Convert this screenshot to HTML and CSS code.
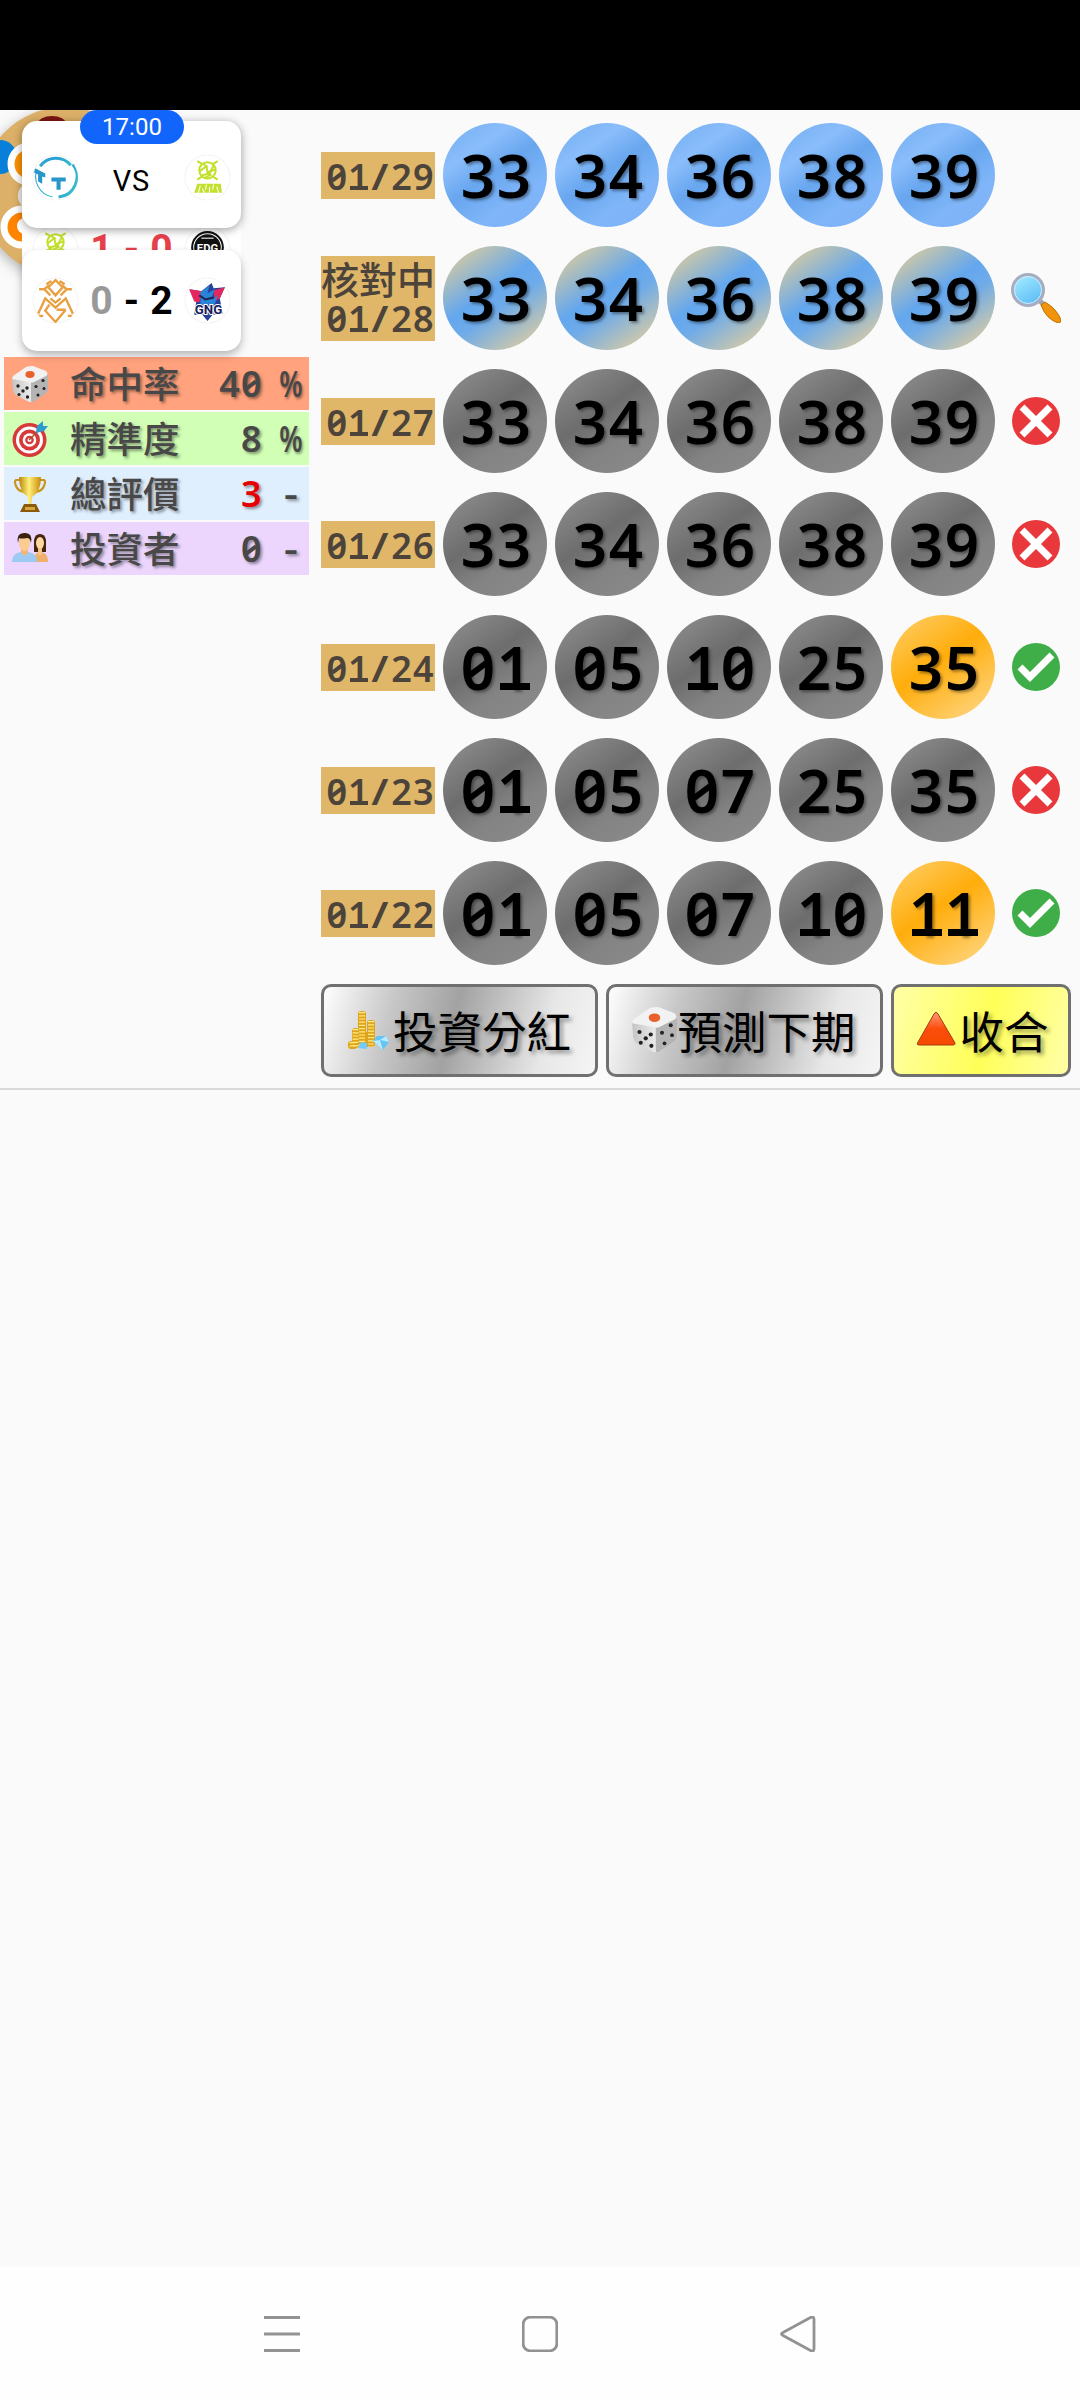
FILE: index.html
```html
<!DOCTYPE html>
<html lang="zh-Hant">
<head>
    <meta charset="UTF-8" />
    <title>539</title>
    <link rel="stylesheet" href="styles.css">
</head>
<body>
<svg class="defs">
    <linearGradient id="gold" x2="1"><stop stop-color="#b98508"/><stop offset=".45" stop-color="#fff07a"/><stop offset="1" stop-color="#c98a08"/></linearGradient>
    <linearGradient id="red" x2="0" y2="1"><stop stop-color="#ff9a75"/><stop offset=".5" stop-color="#fb4d0c"/><stop offset="1" stop-color="#f54b00"/></linearGradient>
    <linearGradient id="glass" x2=".6" y2="1"><stop stop-color="#a8f1ff"/><stop offset="1" stop-color="#61bdf8"/></linearGradient>
    <linearGradient id="tt" x2="1" y2="1"><stop stop-color="#2496d8"/><stop offset="1" stop-color="#38c4c8"/></linearGradient>
    <linearGradient id="face" x2="1"><stop stop-color="#c4c4c4"/><stop offset="1" stop-color="#ededed"/></linearGradient>
    <symbol id="dice" viewBox="0 0 36 36">
        <path d="M0 12 20 15 20 36 17 36 4 29Q2 28 1 24z" fill="url(#face)"/>
        <path d="M19 16 35 8Q37 9 36 22 36 26 33 28L21 36Q19 37 19 34z" fill="#b4b4b4"/>
        <path d="M1 10 14 1Q17 0 21 0L34 5Q37 8 34 10L22 16Q20 17 17 16L0 13z" fill="#f2f2f2"/>
        <ellipse cx="18" cy="8.500" rx="4.600" ry="3.400" fill="#e8612c"/>
        <g fill="#222"><circle cx="6" cy="20" r="1.7"/><circle cx="15" cy="22" r="1.7"/><circle cx="11" cy="25" r="1.7"/><circle cx="7" cy="28.500" r="1.6"/><circle cx="15.500" cy="31" r="1.7"/><circle cx="24" cy="20.500" r="1.6"/><circle cx="31" cy="14.500" r="1.6"/><circle cx="26" cy="29" r="1.5"/><circle cx="32" cy="22.500" r="1.5"/></g>
    </symbol>
    <symbol id="target" viewBox="0 0 36 36">
        <circle cx="17.500" cy="19" r="17" fill="#d93838"/><circle cx="17.500" cy="19" r="13.500" fill="#fff"/><circle cx="17.500" cy="19" r="10.500" fill="#d93838"/><circle cx="17.500" cy="19" r="6.800" fill="#fff"/><circle cx="17.500" cy="19" r="4.300" fill="#d93838"/><circle cx="17.500" cy="19" r="2" fill="#fff"/>
        <path d="M17 19 27 9" stroke="#a0522d" stroke-width="1.500"/>
        <path d="M24 12 25 5 31 0 31 5 36 5 32 10z" fill="#2c9cd0"/>
    </symbol>
    <symbol id="trophy" viewBox="0 0 36 36">
        <path d="M8 4H4Q2 5 4 10 6 15 12 16M28 4H32Q34 5 32 10 30 15 24 16" fill="none" stroke="#c9951c" stroke-width="2.200"/>
        <path d="M7 1H29Q29 16 20 21L19.500 29H16.500L16 21Q7 16 7 1z" fill="url(#gold)"/>
        <path d="M12 28H24L28 36H8z" fill="#8a5a0c"/><path d="M13 31H23V34H13z" fill="#d8a53a"/>
    </symbol>
    <symbol id="people" viewBox="0 0 36 36">
        <path d="M22 21V9Q23 3 28 3 33 3 34 9V21z" fill="#44250f"/>
        <path d="M22 31Q22 21 28 21 36 21 36 31z" fill="#eeb06a"/><ellipse cx="28" cy="12" rx="4" ry="6" fill="#ffd7a0"/><path d="M26 17h4v7h-4z" fill="#f6c489"/>
        <path d="M0 31Q0 22 9 21H16Q25 22 25 31z" fill="#9dcaf2"/>
        <path d="M9 17h7v5l-3.500 3L9 22z" fill="#eeb67b"/><ellipse cx="12.500" cy="12" rx="5.500" ry="8" fill="#fbcb90"/>
        <path d="M6 12Q4 2 12 2 21 1 19 12 18 7 15 7 9 8 7 7z" fill="#3a210f"/>
    </symbol>
    <symbol id="coins" viewBox="0 0 42 40">
        <g fill="#e0a41c"><rect x="11" y="1" width="8" height="36" rx="3"/><rect x="20" y="10" width="8" height="27" rx="3"/><rect x="5" y="18" width="7" height="20" rx="3"/><rect x="1" y="31" width="9" height="8" rx="3"/><rect x="15" y="22" width="8" height="15" rx="3"/></g>
        <g fill="none" stroke="#ffeb83" stroke-width="6" stroke-dasharray="1.200 2"><path d="M15 2V36M24 11V37M8.500 19V38M5.500 32V38"/></g>
        <path d="M11 38 14 32 20 33 20 39z" fill="#70cdf7"/><path d="M26 31 30 26 39 26 42 32 36 40z" fill="#64c4f5"/><path d="M26 31 33 30 36 40zM33 30 39 26 42 32z" fill="#b7ebff"/>
    </symbol>
    <symbol id="tri" viewBox="0 0 40 35"><path d="M20 1.500Q21 1 22 3L39 32Q39.500 34 37 34H3Q.500 34 1.500 32L18 3Q19 1 20 1.500z" fill="url(#red)" stroke="#a83b10"/></symbol>
    <symbol id="look" viewBox="0 0 50 50">
        <path d="M28 27 33 32" stroke="#a2a2aa" stroke-width="5"/>
        <path d="M30 32 34 29Q46 36 50 47 50 50 47 50 35 46 30 32z" fill="#f2930c" stroke="#bd7000"/>
        <circle cx="17" cy="17" r="15.500" fill="url(#glass)" stroke="#a6adc0" stroke-width="3"/><circle cx="17" cy="17" r="13.500" fill="none" stroke="#d7e8f4"/>
    </symbol>
    <symbol id="no" viewBox="0 0 48 48"><circle cx="24" cy="24" r="24" fill="#e8383c"/><path d="M10 10 38 38M38 10 10 38" stroke="#fff" stroke-width="7"/></symbol>
    <symbol id="yes" viewBox="0 0 48 48"><circle cx="24" cy="24" r="24" fill="#3fae49"/><path d="M8 24 18 34 40 12" fill="none" stroke="#fff" stroke-width="7"/></symbol>
    <symbol id="nip" viewBox="0 0 44 44">
        <g fill="none" stroke="#c3e02c" stroke-width="2"><circle cx="22" cy="15" r="8"/><path d="M12 6 17 9M32 6 27 9M12 24 17 21M32 24 27 21M14 16 21 11 22 17 30 14M16 20 24 18 28 10M18 9 22 12M20 22 26 19"/></g>
        <path d="M12 28H35L36 37H9z" fill="#c3e02c"/><path d="M13 37 15 30M17 33 19 37M21 29 20 34M24 31V37M28 29 27 34M31 31 33 37" stroke="#fff" stroke-width="1" fill="none"/>
    </symbol>
</svg>

<div class="statusbar"></div>

<main class="page">
    <section class="stats">
        <div class="stat hit"><svg><use href="#dice"/></svg><span class="name">命中率</span><span class="value mono">40</span><span class="unit mono">%</span></div>
        <div class="stat acc"><svg><use href="#target"/></svg><span class="name">精準度</span><span class="value mono">8</span><span class="unit mono">%</span></div>
        <div class="stat total"><svg><use href="#trophy"/></svg><span class="name">總評價</span><span class="value mono warn">3</span><span class="unit mono">-</span></div>
        <div class="stat inv"><svg><use href="#people"/></svg><span class="name">投資者</span><span class="value mono">0</span><span class="unit mono">-</span></div>
    </section>

    <section class="draws">
        <div id="rows"></div>
        <div class="buttons">
            <button class="silver"><svg class="coins"><use href="#coins"/></svg>投資分紅</button>
            <button class="silver"><svg class="dice"><use href="#dice"/></svg>預測下期</button>
            <button class="yellow"><svg class="tri"><use href="#tri"/></svg>收合</button>
        </div>
    </section>
</main>

<!-- floating score widget -->
<div class="floating">
    <div class="bubble">
        <svg viewBox="0 0 170 170">
            <ellipse cx="72" cy="17" rx="14" ry="8" fill="#7b1512"/>
            <circle cx="20" cy="50" r="17" fill="#087fd8"/>
            <circle cx="49" cy="57" r="18" fill="#ff9100" stroke="#fff" stroke-width="7"/>
            <circle cx="52" cy="89" r="14" fill="#eee"/>
            <circle cx="42" cy="120" r="18" fill="#ff8400" stroke="#fff" stroke-width="7"/><circle cx="45" cy="119" r="8" fill="#fff"/>
        </svg>
    </div>
    <div class="match middle">
        <svg class="team"><use href="#nip"/></svg><b class="score red"><i>1</i><i>-</i><i>0</i></b>
        <svg class="team" viewBox="0 0 44 44"><circle cx="22" cy="20" r="16" fill="#111"/><circle cx="22" cy="20" r="13.500" fill="none" stroke="#fff"/><path d="M16 11H28" stroke="#bbb" stroke-width="1.500"/><text x="22" y="24" text-anchor="middle" class="edg">EDG</text></svg>
    </div>
    <div class="match top">
        <svg class="team" viewBox="0 0 44 44"><g fill="none" stroke="url(#tt)"><path d="M7 11A19 19 0 0 1 37 10" stroke-width="3"/><path d="M39 9A20 20 0 0 1 25 41" stroke-width="3"/><path d="M4 14A20 20 0 0 0 19 41" stroke-width="1"/></g><path d="M2 13 12 18V22L9 21V28L5 26V19L1 17zM18 22H32V26H27V34H23V26H18z" fill="#2796c9"/></svg>
        <span class="vs">VS</span>
        <svg class="team"><use href="#nip"/></svg>
    </div>
    <div class="match bottom">
        <svg class="team" viewBox="0 0 44 44"><g fill="none" stroke="#e8a040" stroke-width="2.300"><path d="M22 2 29 9 22 17 15 9zM6 11 11 11 17 17M38 11 33 11 27 17M13 6 18 3M31 6 26 3M11 11 16 7M33 11 28 7"/><path d="M5 35 12 20 22 29 32 20 39 35M17 20 22 24 27 20M32 31H23M32 31 22 43 12 32 16 26M5 37H10M34 37H39"/></g></svg>
        <b class="score"><i class="lost">0</i><i>-</i><i>2</i></b>
        <svg class="team" viewBox="0 0 44 44"><path d="M5 11 16 13 26 5 28 10 39 9 34 20 37 35 27 36 22 42 17 36 9 36 11 23z" fill="#27409a"/><path d="M4 11 17 13 14 24 9 23zM39 9 28 12 29 23 34 20z" fill="#e4275f"/><path d="M15 14 24 7 22 15 29 11 26 21 32 17 29 26 15 26z" fill="#2784d8"/><path d="M14 17 20 21 28 19" stroke="#202352" fill="none" stroke-width="2"/><text x="23" y="35" text-anchor="middle" class="gng">GNG</text></svg>
    </div>
    <div class="time">17:00</div>
</div>

<nav class="navbar">
    <svg viewBox="0 0 36 36"><path d="M0 1.500H36M0 18H36M0 34.500H36"/></svg>
    <svg viewBox="0 0 36 36"><rect x="1.200" y="1.200" width="33.600" height="33.600" rx="7"/></svg>
    <svg viewBox="0 0 36 36"><path d="M3 16.500 30.500 1.500Q34 0 34 3.500V32.500Q34 36 30.500 34.500L3 19.500Q0 18 3 16.500z"/></svg>
</nav>

<script>
    const draws = [
        { date: '01/29', nums: ['33', '34', '36', '38', '39'], cls: 'next' },
        { date: '01/28', nums: ['33', '34', '36', '38', '39'], cls: 'checking', icon: 'look', note: '核對中' },
        { date: '01/27', nums: ['33', '34', '36', '38', '39'], icon: 'no' },
        { date: '01/26', nums: ['33', '34', '36', '38', '39'], icon: 'no' },
        { date: '01/24', nums: ['01', '05', '10', '25', '35'], icon: 'yes', hit: '35' },
        { date: '01/23', nums: ['01', '05', '07', '25', '35'], icon: 'no' },
        { date: '01/22', nums: ['01', '05', '07', '10', '11'], icon: 'yes', hit: '11' }
    ];

    // one fixed-width cell per character
    const names = { '%': 'pct', '/': 'slash', '-': 'dash' };
    const mono = s => [...s].map(c => `<span class="ch c-${names[c] || c}">${c}</span>`).join('');

    document.getElementById('rows').innerHTML = draws.map(d => `
        <div class="row ${d.cls || ''}">
            <div class="date">${d.note ? `<div class="note">${d.note}</div>` : ''}<div class="day">${mono(d.date)}</div></div>
            ${d.nums.map(n => `<div class="ball ${n === d.hit ? 'hit-ball' : ''}">${mono(n)}</div>`).join('')}
            ${d.icon ? `<svg class="mark ${d.icon}"><use href="#${d.icon}"/></svg>` : ''}
        </div>`).join('');

    document.querySelectorAll('.mono').forEach(el => el.innerHTML = mono(el.textContent));
</script>
</body>
</html>
```
FILE: styles.css
```css
* {
    box-sizing: border-box;
}
body {
    margin: 0;
    height: 2400px;
    display: flex;
    flex-direction: column;
    position: relative;
    overflow: hidden;
    background: #fafafa;
    font-family: "Noto Sans", "Noto Sans CJK TC", sans-serif;
}
.defs {
    position: absolute;
    width: 0;
    height: 0;
}
.statusbar {
    height: 110px;
    background: #000;
}
.page {
    display: flex;
    height: 980px;
    border-bottom: 2px solid #d9d9d9;
}

/* left table */
.stats {
    width: 305px;
    margin: 247px 12px 0 4px;
    display: flex;
    flex-direction: column;
    gap: 2px;
}
.stat {
    height: 53px;
    display: flex;
    align-items: center;
    padding-left: 8px;
    font-size: 36px;
    line-height: 51px;
    font-weight: 600;
    color: #484848;
    text-shadow: 2px 2px 3px rgba(0, 0, 0, .4);
}
.stat svg {
    width: 36px;
    height: 36px;
}
.name {
    font-family: "Noto Sans CJK TC", sans-serif;
    font-size: 36.5px;
    line-height: 49px;
    font-weight: 500;
    width: 115px;
    margin-left: 22px;
    margin-bottom: 2px;
    white-space: nowrap;
}
.value {
    width: 77px;
    text-align: right;
}
.unit {
    width: 40px;
    text-align: right;
}
.warn {
    color: #e60000;
}
.hit { background: #ffa27d; }
.acc { background: #d1ffb5; }
.total { background: #e0effe; }
.inv { background: #ecd6fe; }

/* monospaced digits */
.ch {
    display: inline-block;
    position: relative;
    width: .6em;
    line-height: 1.2;
    text-align: center;
}
/* foot of the 1 */
.c-1::after {
    content: "";
    position: absolute;
    left: .07em;
    right: .04em;
    bottom: .212em;
    height: .115em;
    background: currentColor;
}
/* stroke through the 0 */
.c-0::after {
    content: "";
    position: absolute;
    left: .13em;
    bottom: .52em;
    width: .34em;
    height: .1em;
    background: currentColor;
    transform: rotate(-37deg);
}
.c-pct {
    display: inline-flex;
    justify-content: center;
    transform: scaleX(.74);
}
.c-slash {
    transform: scaleX(1.2);
}
.c-dash {
    transform: scaleX(1.2);
}

/* draws */
.draws {
    width: 755px;
    padding-top: 4px;
}
.row {
    height: 123px;
    padding-bottom: 1px;
    display: flex;
    align-items: center;
}
.date {
    width: 114px;
    margin-right: 8px;
    background: #e0b669;
    color: #4c443a;
    font-size: 36px;
    font-weight: 600;
}
.day {
    height: 47px;
    line-height: 50px;
    padding-left: 5px;
    white-space: nowrap;
}
.note {
    height: 41px;
    line-height: 43px;
    font-family: "Noto Sans CJK TC", sans-serif;
    font-weight: 500;
    font-size: 38px;
    white-space: nowrap;
}
.note + .day {
    height: 44px;
    line-height: 44px;
}
.ball {
    width: 104px;
    height: 104px;
    margin-right: 8px;
    padding-left: 2px;
    border-radius: 50%;
    background: linear-gradient(145deg, #929292, #6d6d6d 42%, #838383 65%, #8c8c8c);
    color: #000;
    font-size: 60px;
    line-height: 104px;
    font-weight: 600;
    text-align: center;
    white-space: nowrap;
    text-shadow: 2px 2px 3px rgba(0, 0, 0, .4);
}
.next .ball {
    background: linear-gradient(145deg, #74aef0, #8abdfb 28%, #68a6ee 48%, #80b6f9 72%, #7bb2f4);
}
.checking .ball {
    background: linear-gradient(145deg, #d1c9a4 10%, #64a7ee 44%, #6eabe9 58%, #c8c6ae 86%);
}
.row .hit-ball {
    background: linear-gradient(145deg, #ffca5c 8%, #ffad0b 45%, #ffd47c 92%);
}
.mark {
    width: 48px;
    height: 48px;
    margin-left: 9px;
}
.look {
    width: 50px;
    height: 50px;
    margin-left: 8px;
}
.buttons {
    display: flex;
    gap: 8px;
    margin-top: 9px;
}
button {
    width: 277px;
    height: 93px;
    padding: 0 1px 2px 0;
    border: 3px solid #707070;
    border-radius: 10px;
    display: flex;
    align-items: center;
    justify-content: center;
    font-family: "Noto Sans CJK TC", sans-serif;
    font-size: 44.5px;
    color: #000;
    text-shadow: 3px 3px 4px rgba(0, 0, 0, .4);
}
.silver {
    background: linear-gradient(105deg, #fafafa 2%, #c7c7c7 25%, #a2a2a2 47%, #bdbdbd 60%, #e7e7e7 80%, #f5f5f5);
}
.yellow {
    width: 180px;
    padding: 0 0 2px 3px;
    background: linear-gradient(105deg, #ffffa0 5%, #ffff58 53%, #ffffa0 95%);
}
button svg {
    width: 45px;
    height: 45px;
    flex: none;
}
button .coins {
    width: 42px;
    height: 40px;
    margin: 0 4px 0 0;
}
button .tri {
    width: 40px;
    height: 35px;
    margin: 0 3px 2px 0;
}

/* floating widget */
.floating {
    position: absolute;
    left: 0;
    top: 110px;
    width: 270px;
    height: 262px;
    overflow: hidden;
    font-family: Roboto, sans-serif;
}
.bubble {
    position: absolute;
    left: -20px;
    top: -3px;
    width: 170px;
    height: 170px;
    border-radius: 50%;
    background: #dcb068;
    overflow: hidden;
    box-shadow: 0 4px 14px rgba(0, 0, 0, .3);
}
.match {
    position: absolute;
    left: 22px;
    width: 219px;
    padding: 0 11px;
    display: flex;
    align-items: center;
    justify-content: space-between;
    background: #fff;
    border-radius: 15px;
}
.top {
    top: 11px;
    height: 107px;
    padding-top: 5px;
    box-shadow: 0 2px 10px rgba(0, 0, 0, .38);
}
.middle {
    top: 85px;
    height: 107px;
    padding-top: 1px;
}
.bottom {
    top: 140px;
    height: 101px;
    box-shadow: 0 4px 8px rgba(0, 0, 0, .28);
}
.team {
    width: 45px;
    height: 45px;
    border-radius: 50%;
    box-shadow: 0 0 1px #ccc;
}
.vs {
    padding-top: 8px;
    font-size: 29px;
    letter-spacing: 1px;
    color: #000;
}
.score {
    display: flex;
    font-size: 39px;
}
.score i {
    width: 30px;
    text-align: center;
    font-style: normal;
}
.red {
    color: #e8404b;
}
.lost {
    color: #999;
}
.time {
    position: absolute;
    left: 80px;
    top: 0;
    width: 104px;
    height: 34px;
    border-radius: 17px;
    background: #1265fb;
    color: #fff;
    font-size: 24px;
    line-height: 34px;
    text-align: center;
}
.edg {
    font: bold 11px Roboto, sans-serif;
    fill: #fff;
}
.gng {
    font: bold 13px Roboto, sans-serif;
    fill: #18205c;
    stroke: #fff;
    stroke-width: 2px;
    paint-order: stroke;
}

.navbar {
    height: 133px;
    margin-top: auto;
    padding: 0 264px;
    display: flex;
    align-items: center;
    justify-content: space-between;
    background: #fefefe;
}
.navbar svg {
    width: 36px;
    height: 36px;
    fill: none;
    stroke: #929292;
    stroke-width: 2.8;
}
```
